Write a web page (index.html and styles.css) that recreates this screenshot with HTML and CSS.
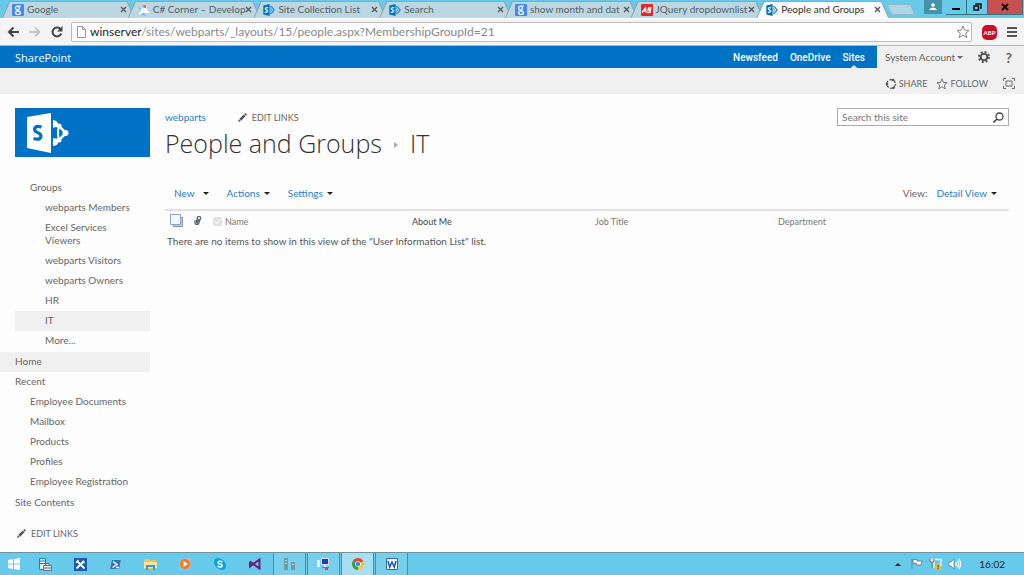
FILE: index.html
```
<!DOCTYPE html>
<html lang="en">
  <head>
    <meta charset="UTF-8" />
    <meta name="viewport" content="width=device-width, initial-scale=1.0" />
    <title>People and Groups</title>
    <link rel="stylesheet" href="styles.css" />
  </head>
  <body>
    <!-- Shared icons -->
    <svg class="sprite" aria-hidden="true">
      <symbol id="sp" viewBox="0 0 40 40">
        <path fill="#0072c6" d="M1 5 L22 0 V40 L1 35Z" />
        <path fill="none" stroke="#1f86d4" stroke-width="4" d="M24 8 L30 11 L37 20 L30 29 L24 32" />
        <path fill="none" stroke="#1f86d4" stroke-width="3" d="M24 14 L29 20 L24 26" />
        <path fill="none" stroke="#fff" stroke-width="4" d="M17 13 C8 10 5 17 11 19.500 C19 22 16 30 6 27" />
      </symbol>
      <symbol id="google" viewBox="0 0 12 12">
        <rect width="12" height="12" rx="1" fill="#4587f3" />
        <circle cx="5.500" cy="4" r="1.900" fill="none" stroke="#fff" stroke-width="1.200" />
        <ellipse cx="6" cy="8.800" rx="2.500" ry="1.700" fill="none" stroke="#fff" stroke-width="1.200" />
        <path stroke="#fff" d="M6 2h3M6 6l1 1.500" />
      </symbol>
      <symbol id="pencil" viewBox="0 0 10 10">
        <path fill="#555" d="M0 10 L1 7 L3 9Z M1.500 6.500 L6.500 1.700 L8.300 3.500 L3.500 8.500Z M7 1.200 L8.200 0 L10 1.800 L8.800 3Z" />
      </symbol>
      <symbol id="star" viewBox="0 0 14 14">
        <path fill="none" stroke="currentColor" d="M7 1 L8.700 5.200 L13 5.400 L9.700 8.200 L10.800 12.700 L7 10.200 L3.200 12.700 L4.300 8.200 L1 5.400 L5.300 5.200Z" />
      </symbol>
      <symbol id="cross" viewBox="0 0 7 7">
        <path stroke="#555" stroke-width="1.300" d="M1 1l5 5M6 1L1 6" />
      </symbol>
    </svg>

    <!-- Browser tabs -->
    <header class="browser">
      <div class="tab-strip">
        <div class="tabs">
          <div class="tab"><div class="tab-body"><svg class="favicon"><use href="#google" /></svg><span class="tab-title">Google</span><button class="tab-close" aria-label="Close tab"><svg width="7" height="7"><use href="#cross" /></svg></button></div></div>
          <div class="tab"><div class="tab-body"><svg class="favicon" viewBox="0 0 12 12"><path fill="#fff" d="M1 3 L5 5 L8 1 L9 6 L12 9 L8 9 L6 12 L4 9 L0 11 L3 7Z" /><path fill="#7bb7e6" d="M0 3l3 1v3zM3 11l3-3 2 4z" /><path fill="#ef6b53" d="M5 1h3v3H6z" /></svg><span class="tab-title">C# Corner – Develop</span><button class="tab-close" aria-label="Close tab"><svg width="7" height="7"><use href="#cross" /></svg></button></div></div>
          <div class="tab"><div class="tab-body"><svg class="favicon"><use href="#sp" /></svg><span class="tab-title">Site Collection List</span><button class="tab-close" aria-label="Close tab"><svg width="7" height="7"><use href="#cross" /></svg></button></div></div>
          <div class="tab"><div class="tab-body"><svg class="favicon"><use href="#sp" /></svg><span class="tab-title">Search</span><button class="tab-close" aria-label="Close tab"><svg width="7" height="7"><use href="#cross" /></svg></button></div></div>
          <div class="tab"><div class="tab-body"><svg class="favicon"><use href="#google" /></svg><span class="tab-title">show month and dat</span><button class="tab-close" aria-label="Close tab"><svg width="7" height="7"><use href="#cross" /></svg></button></div></div>
          <div class="tab"><div class="tab-body"><svg class="favicon" viewBox="0 0 12 12"><rect width="12" height="12" rx="1" fill="#dc2b2b" /><path fill="none" stroke="#fff" stroke-width="1.300" d="M1 8.500 L4.500 4 L5 8.500 M2.500 7h2.500 M10.500 4H7.500L7 6h2.500L9 8.300H6" /></svg><span class="tab-title">JQuery dropdownlist</span><button class="tab-close" aria-label="Close tab"><svg width="7" height="7"><use href="#cross" /></svg></button></div></div>
          <div class="tab active"><div class="tab-body"><svg class="favicon"><use href="#sp" /></svg><span class="tab-title">People and Groups</span><button class="tab-close" aria-label="Close tab"><svg width="7" height="7"><use href="#cross" /></svg></button></div></div>
        </div>
        <button class="new-tab" aria-label="New tab"></button>
        <div class="window-controls">
          <button class="profile" aria-label="Profile"><svg width="8" height="8" viewBox="0 0 8 8"><circle cx="4" cy="2" r="1.800" fill="#fff" /><path fill="#fff" d="M0 7 Q1 4.500 4 4.500 T8 7Z" /></svg></button>
          <button class="win-btn" aria-label="Minimize"><svg width="8" height="8"><path d="M0 5h8v2H0z" /></svg></button>
          <button class="win-btn" aria-label="Restore"><svg width="9" height="8"><path fill="none" stroke="#111" stroke-width="1.500" d="M3 2V1h5v4H7M1 3h4.500v4H1z" /></svg></button>
          <button class="win-btn close" aria-label="Close"><svg width="8" height="8"><path stroke="#111" stroke-width="2" d="M1 1l6 6M7 1L1 7" /></svg></button>
        </div>
      </div>

      <!-- Address bar -->
      <div class="toolbar">
        <button class="tool" aria-label="Back"><svg width="12" height="12"><path fill="none" stroke="#444" stroke-width="2" d="M12 6H2M6.500 1.500L2 6l4.500 4.500" /></svg></button>
        <button class="tool" aria-label="Forward"><svg width="12" height="12"><path fill="none" stroke="#bbb" stroke-width="1.500" d="M0 6h10M6 1.500L10.500 6 6 10.500" /></svg></button>
        <button class="tool" aria-label="Reload"><svg width="12" height="12"><path fill="none" stroke="#444" stroke-width="2" d="M9.500 3A4.500 4.500 0 1 0 10.300 7.500" /><path fill="#444" d="M11.500 0v5.500H6z" /></svg></button>
        <div class="address">
          <svg width="9" height="12"><path fill="#fff" stroke="#999" d="M.5.500h5l3 3v8h-8zM5.500.500v3h3" /></svg>
          <div class="url"><b>winserver</b>/sites/webparts/_layouts/15/people.aspx?MembershipGroupId=21</div>
          <svg class="bookmark" width="14" height="14"><use href="#star" /></svg>
        </div>
        <button class="abp" aria-label="Adblock Plus">ABP</button>
        <button class="tool" aria-label="Menu"><svg width="10" height="10"><path fill="#555" d="M0 0h10v2H0zM0 4h10v2H0zM0 8h10v2H0z" /></svg></button>
      </div>
    </header>

    <!-- Suite bar -->
    <div class="suite-bar">
      <div class="suite-left">
        <a class="brand" href="#">SharePoint</a>
        <nav class="suite-links">
          <a href="#">Newsfeed</a>
          <a href="#">OneDrive</a>
          <a class="selected" href="#">Sites</a>
        </nav>
      </div>
      <div class="suite-right">
        <button class="account">System Account<span class="caret"></span></button>
        <button class="icon-btn" aria-label="Settings"><svg width="12" height="12" viewBox="0 0 12 12"><circle cx="6" cy="6" r="3.300" fill="none" stroke="#555" stroke-width="2" /><circle cx="6" cy="6" r="5" fill="none" stroke="#555" stroke-width="2" stroke-dasharray="2 1.930" /></svg></button>
        <button class="icon-btn help" aria-label="Help">?</button>
      </div>
    </div>

    <div class="actions-bar">
      <button class="action"><svg width="12" height="12" viewBox="0 0 12 12"><circle cx="6" cy="6" r="4.300" fill="none" stroke="#555" stroke-width="1.200" stroke-dasharray="7.500 1.500" /><circle cx="2" cy="6" r="1.300" fill="#555" /><circle cx="8" cy="2" r="1.300" fill="#555" /><circle cx="8.500" cy="9.700" r="1.300" fill="#555" /></svg>SHARE</button>
      <button class="action"><svg width="12" height="12"><use href="#star" /></svg>FOLLOW</button>
      <button class="action focus" aria-label="Focus on content"><svg width="12" height="11"><path fill="none" stroke="#666" d="M.5 3V.5H3M9 .5h2.500V3M11.500 8v2.500H9M3 10.500H.5V8M3 3h6v5H3z" /></svg></button>
    </div>

    <div class="page">
      <!-- Left navigation -->
      <aside class="sidebar">
        <a class="logo" href="#" aria-label="SharePoint home">
          <svg width="44" height="42" viewBox="0 0 44 42">
            <path fill="#fff" d="M1 5 L25 1 V41 L1 36Z" />
            <path fill="none" stroke="#0072c6" stroke-width="3.200" d="M15.500 15 C8 12.500 6.500 19 11.500 20.500 C17.500 22.500 15.500 29 7.500 26.500" />
            <path fill="none" stroke="#fff" stroke-width="2.500" d="M27 12 L33 14 L40 21 L33 28 L27 32" />
            <path fill="none" stroke="#fff" stroke-width="2" d="M33 14 Q31 21 33 28" />
            <path fill="#fff" d="M27 8 a5 5 0 0 1 5 6 L27 16Z M27 26 l5 1 a5 5 0 0 1 -5 7Z" />
            <circle cx="33" cy="14" r="2.500" fill="#fff" />
            <circle cx="33" cy="28" r="2.500" fill="#fff" />
            <circle cx="39.500" cy="21" r="3" fill="#fff" />
          </svg>
        </a>
        <nav>
          <ul class="quick-launch">
            <li>
              <a class="level2" href="#">Groups</a>
              <ul>
                <li><a class="level3" href="#">webparts Members</a></li>
                <li><a class="level3" href="#">Excel Services Viewers</a></li>
                <li><a class="level3" href="#">webparts Visitors</a></li>
                <li><a class="level3" href="#">webparts Owners</a></li>
                <li><a class="level3" href="#">HR</a></li>
                <li><a class="level3 current" href="#">IT</a></li>
                <li><a class="level3" href="#">More...</a></li>
              </ul>
            </li>
            <li><a class="level1 current" href="#">Home</a></li>
            <li>
              <a class="level1" href="#">Recent</a>
              <ul>
                <li><a class="level2" href="#">Employee Documents</a></li>
                <li><a class="level2" href="#">Mailbox</a></li>
                <li><a class="level2" href="#">Products</a></li>
                <li><a class="level2" href="#">Profiles</a></li>
                <li><a class="level2" href="#">Employee Registration</a></li>
              </ul>
            </li>
            <li><a class="level1" href="#">Site Contents</a></li>
          </ul>
          <a class="edit-links" href="#"><svg width="9" height="9"><use href="#pencil" /></svg>EDIT LINKS</a>
        </nav>
      </aside>

      <!-- Main content -->
      <main class="content">
        <div class="title-row">
          <div>
            <div class="top-nav">
              <a class="site-link" href="#">webparts</a>
              <a class="edit-links" href="#"><svg width="9" height="9"><use href="#pencil" /></svg>EDIT LINKS</a>
            </div>
            <h1>People and Groups <span class="crumb"></span> IT</h1>
          </div>
          <form class="search">
            <input type="text" placeholder="Search this site" aria-label="Search this site" />
            <button type="button" aria-label="Search"><svg width="11" height="11"><circle cx="6.500" cy="4.500" r="3.500" fill="none" stroke="#444" stroke-width="1.300" /><path stroke="#444" stroke-width="1.600" d="M4 7L.5 10.500" /></svg></button>
          </form>
        </div>

        <div class="list-menu">
          <button class="wide">New<span class="caret"></span></button>
          <button>Actions<span class="caret"></span></button>
          <button>Settings<span class="caret"></span></button>
          <span class="view-label">View:</span>
          <button>Detail View<span class="caret"></span></button>
        </div>

        <table class="people">
          <thead>
            <tr>
              <th class="col-icon"><svg width="13" height="13"><path fill="#b9c9e0" stroke="#8296b5" d="M3.500 3.500h9v9h-9z" /><path fill="#f4f8fd" stroke="#8ea3c2" d="M.5.500h10v10H.5z" /></svg></th>
              <th class="col-icon"><svg width="8" height="9"><path fill="none" stroke="#59636f" stroke-width="1.300" d="M1 4V6.500a2 2 0 0 0 4 0L6.500 2.500a1.500 1.500 0 0 0-3-1L2.500 6q1 2 1.500-1L5 3" /></svg></th>
              <th class="col-name"><label><input type="checkbox" checked disabled />Name</label></th>
              <th class="col-about">About Me</th>
              <th class="col-job">Job Title</th>
              <th>Department</th>
            </tr>
          </thead>
          <tbody>
            <tr>
              <td colspan="6">There are no items to show in this view of the "User Information List" list.</td>
            </tr>
          </tbody>
        </table>
      </main>
    </div>

    <!-- Windows taskbar -->
    <footer class="taskbar">
      <button class="task" aria-label="Start"><svg width="12" height="12"><path fill="#fff" d="M0 2l5-1v4.500H0zM6 1l6-1v5.500H6zM0 6.500h5V11l-5-1zM6 6.500h6V12l-6-1z" /></svg></button>
      <button class="task" aria-label="Server Manager"><svg width="13" height="13"><path fill="#e8f3fa" stroke="#2b7ab5" d="M.5.500h6v11h-6z" /><path stroke="#2b7ab5" d="M1 3h5M1 5.500h5" /><path fill="#dde5ea" stroke="#68788a" d="M4.500 7.500h8v5h-8zM7 7V5.500h3V7M4.500 10h8" /></svg></button>
      <button class="task" aria-label="Tools"><svg width="13" height="13"><path fill="#1c5ca8" d="M0 0h13v13H0z" /><path stroke="#fff" stroke-width="1.800" d="M3 3l7.500 7.500M10 3L2.500 10.500" /><path stroke="#fff" stroke-width="1.300" d="M2 4.500L4.500 2M8.500 3L10.500 5" /></svg></button>
      <button class="task" aria-label="PowerShell"><svg width="13" height="11"><path fill="#2f77b5" stroke="#8ec3e5" d="M2.500.500h10l-2 10H.5z" /><path fill="none" stroke="#fff" stroke-width="1.400" d="M4 2.500l4 3-4.500 3M7 8.500h3" /></svg></button>
      <button class="task" aria-label="File Explorer"><svg width="13" height="12"><path fill="#e6c562" d="M0 1h5l1 1h6v9H0z" /><path fill="#f8e6a0" d="M0 4h13v6H0z" /><path fill="none" stroke="#4696ca" stroke-width="2" d="M3 12V8h7v4" /></svg></button>
      <button class="task" aria-label="Media Player"><svg width="12" height="12"><path fill="#9bbddb" d="M0 0h12v12H0z" /><circle cx="6" cy="6" r="5" fill="#f47b12" /><path fill="#fff" d="M4.500 3l4.500 3-4.500 3z" /></svg></button>
      <button class="task" aria-label="Skype"><svg width="12" height="12"><circle cx="4" cy="4" r="4" fill="#08a4de" /><circle cx="8" cy="8" r="4" fill="#08a4de" /><circle cx="6" cy="6" r="5" fill="#08a4de" /><path fill="none" stroke="#fff" stroke-width="1.500" d="M8.300 4.200C7 2.600 3.800 3 4 4.800c.3 1.600 4.100.8 4.200 2.600C8.200 9.300 5 9.600 3.700 7.800" /></svg></button>
      <button class="task" aria-label="Visual Studio"><svg width="12" height="12"><path fill="none" stroke="#68217a" stroke-width="2" d="M1 3.500v5L10.500 1.500v9L1 3.500M1 8.500l3-2.500" /></svg></button>
      <button class="task open" aria-label="Servers"><svg width="13" height="12"><path fill="#709ba5" d="M1 0h4v12H1zM8 4h4v8H8z" /><path stroke="#b9d5d9" d="M2 2.500h2M2 5.500h2M9 6.500h2" /></svg></button>
      <button class="task open" aria-label="Remote Desktop"><svg width="13" height="12"><path fill="#2439b5" stroke="#dfe5ed" d="M4.500.500h7v6h-7z" /><path fill="#e8edf1" d="M0 2h3v7H0zM7 7h2v2H7z" /><path stroke="#777" d="M5 9.500h7" /><path fill="#c34c4c" d="M8 9h3v3H8z" /></svg></button>
      <button class="task open focused" aria-label="Chrome"><svg width="12" height="12"><circle cx="6" cy="6" r="6" fill="#f6c827" /><path fill="#dd4537" d="M6 6L.8 3A6 6 0 0 1 11.200 3z" /><path fill="#32a350" d="M6 6L.8 3A6 6 0 0 0 6 12z" /><circle cx="6" cy="6" r="2.800" fill="#fff" /><circle cx="6" cy="6" r="2.200" fill="#4285f4" /></svg></button>
      <button class="task open" aria-label="Word"><svg width="12" height="12"><path fill="#f4f8fc" stroke="#2f67b1" d="M.5.500h11v11H.5z" /><path fill="none" stroke="#1f56a5" stroke-width="1.500" d="M2 3l1.700 6L6 4l2.300 5L10 3" /></svg></button>
      <div class="tray">
        <span class="tray-up"></span>
        <svg width="12" height="12"><path fill="#fff" stroke="#58717c" stroke-width=".8" d="M1 1v10M2 1.500h4v1.500h5l-1 4H5.500V5.500H2z" /></svg>
        <svg width="13" height="12"><path fill="none" stroke="#eee" stroke-width="1.500" d="M4 1.500h8V8M5 3v7" /><path fill="#ddd" stroke="#777" d="M1 .5v3q2 2 4 0v-3M3 4v6" /><path fill="#f7bd22" d="M9 4.500l4 7H5z" /><path stroke="#333" d="M9 7v2.500M9 10v1" /></svg>
        <svg width="13" height="12"><path fill="#fff" stroke="#65818c" stroke-width=".8" d="M1 4h2l3-3v10L3 8H1z" /><path fill="none" stroke="#fff" stroke-width="1.200" d="M7.500 4q1.500 2 0 4M9.300 2.500q2.500 3.500 0 7M11 1q3 5 0 10" /></svg>
        <time>16:02</time>
      </div>
    </footer>
  </body>
</html>
```
FILE: styles.css
```
* {
  box-sizing: border-box;
}

body {
  margin: 0;
  min-height: 100vh;
  display: flex;
  flex-direction: column;
  background-color: #fdfdfd;
  color: #666;
  font-family: Lato, "Open Sans", sans-serif;
  font-size: 10px;
  line-height: 13px;
}

a {
  color: inherit;
  text-decoration: none;
}

button {
  display: flex;
  align-items: center;
  justify-content: center;
  padding: 0;
  border: none;
  background: none;
  color: inherit;
  font: inherit;
  cursor: pointer;
}

ul {
  list-style: none;
  margin: 0;
  padding: 0;
}

svg {
  flex: none;
}

.sprite {
  width: 0;
  height: 0;
  position: absolute;
}

/* Browser tabs */
.tab-strip {
  display: flex;
  align-items: flex-start;
  height: 18px;
  padding-left: 2px;
  background-color: #66cbea;
}

.tabs {
  flex: 1;
  display: flex;
  min-width: 0;
  padding-top: 1px;
}

.tab {
  flex: 1 1 0;
  min-width: 0;
  padding: 1px 1px 0;
  background-color: #8ba9b5;
  clip-path: polygon(0 100%, 7px 0, calc(100% - 7px) 0, 100% 100%);
}

.tab + .tab {
  margin-left: -7px;
}

.tab-body {
  display: flex;
  align-items: center;
  gap: 3px;
  height: 16px;
  padding: 0 7px 1px 9px;
  background-color: #bcd6e2;
  color: #555f64;
  clip-path: polygon(0 100%, 7px 0, calc(100% - 7px) 0, 100% 100%);
}

.tab.active .tab-body {
  background-color: #fafafa;
  color: #333;
}

.favicon {
  width: 12px;
  height: 12px;
}

.tab-title {
  flex: 1;
  min-width: 0;
  white-space: nowrap;
}

.new-tab {
  width: 24px;
  height: 11px;
  margin-top: 4px;
  background-color: #b0d5e3;
  border: 1px solid #8dbccc;
  border-radius: 2px;
  transform: skewX(25deg);
}

.window-controls {
  display: flex;
  margin-left: 11px;
  margin-right: 1px;
}

.profile {
  width: 18px;
  height: 14px;
  margin-right: 4px;
  background-color: #4692aa;
}

.win-btn {
  width: 21px;
  height: 15px;
  border: 1px solid #36717f;
  border-top: none;
  border-left: none;
}

.win-btn.close {
  width: 35px;
  background-color: #c75050;
}

/* Address bar */
.toolbar {
  display: flex;
  align-items: center;
  gap: 10px;
  height: 28px;
  padding: 0 7px;
  background-color: #f4f4f4;
  border-top: 1px solid #fff;
  border-bottom: 1px solid #b5b5b5;
}

.address {
  flex: 1;
  display: flex;
  align-items: center;
  gap: 4px;
  height: 20px;
  margin-left: -2px;
  padding: 0 1px 0 5px;
  background-color: #fff;
  border: 1px solid #bbb;
  border-radius: 2px;
  color: #888;
}

.url {
  flex: 1;
  font-size: 12px;
  line-height: 16px;
}

.url b {
  color: #222;
  font-weight: 400;
}

.abp {
  width: 15px;
  height: 15px;
  border-radius: 5px;
  background-color: #c70d2c;
  color: #fff;
  font-size: 6px;
  font-weight: 700;
}

/* Suite bar */
.suite-bar {
  display: flex;
  height: 22px;
  background-color: #f0f0f0;
}

.suite-left {
  flex: 1;
  display: flex;
  align-items: center;
  justify-content: space-between;
  padding: 0 12px 0 15px;
  background-color: #0072c6;
  color: #fff;
}

.brand {
  font-family: "Open Sans", sans-serif;
  font-size: 11px;
}

.suite-links {
  display: flex;
  align-self: stretch;
  gap: 12px;
  font-family: Roboto, sans-serif;
  font-weight: 500;
}

.suite-links a {
  line-height: 23px;
}

.suite-links .selected {
  position: relative;
}

.selected::after {
  content: "";
  position: absolute;
  left: 50%;
  bottom: 0;
  margin-left: -3px;
  border: 3px solid transparent;
  border-top: none;
  border-bottom-color: #f0f0f0;
}

.suite-right {
  display: flex;
  align-items: center;
  justify-content: space-between;
  width: 147px;
  padding: 0 12px 0 8px;
}

.caret {
  width: 0;
  height: 0;
  margin-left: 4px;
  border: 3px solid transparent;
  border-top-color: currentColor;
  border-bottom: none;
}

.account .caret {
  margin-left: 2px;
}

.help {
  font-size: 14px;
  font-weight: 700;
}

.actions-bar {
  display: flex;
  align-items: center;
  justify-content: flex-end;
  gap: 9px;
  height: 26px;
  padding: 5px 9px 0 0;
  background-color: #f0f0f0;
  font-size: 9px;
}

.action {
  gap: 2px;
}

.action.focus {
  margin-left: 6px;
}

/* Page */
.page {
  flex: 1;
  display: flex;
  gap: 15px;
  padding: 14px 15px 0 0;
}

.sidebar {
  width: 150px;
}

.logo {
  display: flex;
  align-items: center;
  height: 49px;
  margin-left: 15px;
  padding-left: 11px;
  background-color: #0072c6;
}

.quick-launch {
  padding-top: 21px;
}

.quick-launch a {
  display: block;
  padding: 3px 15px 4px;
}

.quick-launch ul {
  padding-bottom: 1px;
}

.quick-launch .level2 {
  margin-left: 15px;
  padding-right: 0;
}

.quick-launch .level3 {
  margin-left: 15px;
  padding-left: 30px;
}

.quick-launch .current {
  background-color: #f0f0f0;
}

.edit-links {
  display: flex;
  align-items: center;
  gap: 5px;
  font-size: 9px;
}

.sidebar .edit-links {
  padding: 14px 0 0 17px;
}

/* Main content */
.content {
  flex: 1;
}

.title-row {
  display: flex;
  justify-content: space-between;
  align-items: flex-start;
}

.top-nav {
  display: flex;
  align-items: center;
  gap: 32px;
  height: 19px;
}

.site-link {
  color: #2a7cc7;
}

h1 {
  display: flex;
  align-items: center;
  gap: 12px;
  margin: 0;
  color: #333;
  font-family: "Open Sans", sans-serif;
  font-size: 25px;
  font-weight: 300;
  line-height: 32px;
}

.crumb {
  margin-top: 4px;
  border: 3px solid transparent;
  border-left: 4px solid #aaa;
  border-right: none;
}

.search {
  display: flex;
  align-items: center;
  width: 172px;
  height: 18px;
  padding: 0 4px;
  background-color: #fff;
  border: 1px solid #ababab;
}

.search input {
  flex: 1;
  min-width: 0;
  padding: 0;
  border: none;
  outline: none;
  color: #666;
  font: inherit;
}

.search input::placeholder {
  color: #777;
}

.list-menu {
  display: flex;
  align-items: center;
  gap: 18px;
  height: 52px;
  padding: 19px 12px 0 9px;
  border-bottom: 2px solid #e1e1e1;
}

.list-menu button {
  color: #2a7cc7;
}

.list-menu .caret {
  border-top-color: #222;
}

.list-menu .wide .caret {
  margin-left: 8px;
}

.view-label {
  margin-left: auto;
  margin-right: -9px;
}

.people {
  width: 100%;
  border-collapse: collapse;
  table-layout: fixed;
}

.people th {
  height: 20px;
  padding: 1px 0 0;
  color: #777;
  font-size: 9px;
  font-weight: 400;
  text-align: left;
}

.people .col-icon {
  width: 24px;
  padding-left: 5px;
}

.people .col-name {
  width: 199px;
}

.people .col-about,
.people .col-job {
  width: 183px;
}

.people .col-about {
  color: #444;
}

.col-name label {
  display: flex;
  align-items: center;
  gap: 3px;
}

.col-name input {
  width: 9px;
  height: 9px;
  margin: 0;
  opacity: 0.6;
}

.people td {
  padding: 4px 2px;
  color: #555;
}

/* Taskbar */
.taskbar {
  display: flex;
  height: 23px;
  background-color: #67caea;
  border-top: 1px solid #71939e;
}

.task {
  width: 34px;
  margin-right: 1px;
}

.task:first-child {
  width: 28px;
  margin-right: 0;
}

.task.open {
  width: 33px;
  background-color: #78cfeb;
  border: 1px solid #4691a9;
  border-top: none;
  border-bottom: none;
}

.task.focused {
  background-color: #a7def2;
}

.tray {
  display: flex;
  align-items: center;
  gap: 6px;
  margin-left: auto;
  padding-right: 19px;
  color: #222;
  line-height: 12px;
}

.tray-up {
  margin-right: 4px;
  border: 3px solid transparent;
  border-top: none;
  border-bottom-color: #222;
}

.tray time {
  margin-left: 12px;
}
```
